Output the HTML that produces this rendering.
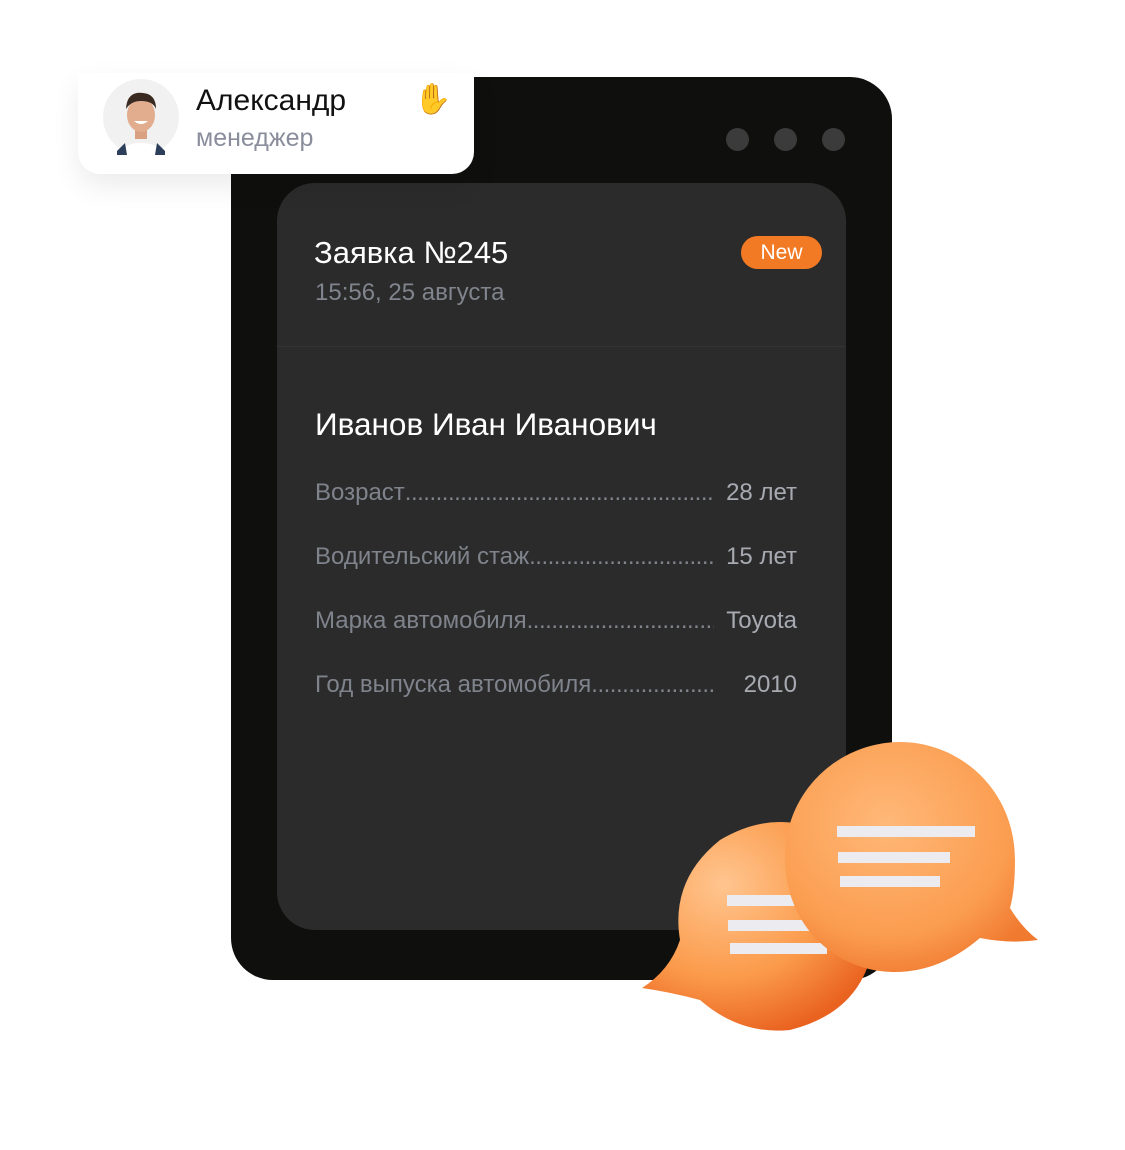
<!DOCTYPE html>
<html><head><meta charset="utf-8"><style>
body{margin:0;width:1125px;height:1150px;background:#fff;position:relative;overflow:hidden;font-family:"Liberation Sans",sans-serif}
.frame{position:absolute;left:231px;top:77px;width:661px;height:903px;background:#0f100d;border-radius:42px}
.dot{position:absolute;top:128px;width:23px;height:23px;border-radius:50%;background:#3b3b3b}
.card{position:absolute;left:277px;top:183px;width:569px;height:747px;background:#2b2b2b;border-radius:38px}
.div{position:absolute;left:277px;top:346px;width:569px;height:1px;background:#333}
.t{position:absolute;white-space:nowrap}
.row{position:absolute;left:315px;width:482px;font-size:24px;color:#7f838c;display:flex}
.row .d{flex:1;overflow:hidden;color:#7f838c;letter-spacing:-0.5px}
.row .v{color:#a7aab1;padding-left:12px}
.prof{position:absolute;left:78px;top:73px;width:396px;height:101px;background:#fff;border-radius:0 0 22px 22px;box-shadow:0 12px 28px rgba(0,0,0,.08)}
</style></head><body>
<div class="frame"></div>
<div class="dot" style="left:726px"></div><div class="dot" style="left:774px"></div><div class="dot" style="left:822px"></div>
<div class="card"></div><div class="div"></div>
<div class="t" style="left:314px;top:235px;font-size:31px;color:#fff">Заявка №245</div>
<div class="t" style="left:315px;top:279px;font-size:24px;color:#80848d">15:56, 25 августа</div>
<div class="t" style="left:741px;top:236px;width:81px;height:33px;border-radius:17px;background:#f27a25;color:#fff;font-size:21px;line-height:33px;text-align:center">New</div>
<div class="t" style="left:315px;top:406px;font-size:31.5px;color:#fff">Иванов Иван Иванович</div>
<div class="row" style="top:479px"><span>Возраст</span><span class="d">..................................................................................</span><span class="v">28 лет</span></div>
<div class="row" style="top:543px"><span>Водительский стаж</span><span class="d">..................................................................................</span><span class="v">15 лет</span></div>
<div class="row" style="top:607px"><span>Марка автомобиля</span><span class="d">..................................................................................</span><span class="v">Toyota</span></div>
<div class="row" style="top:671px"><span>Год выпуска автомобиля</span><span class="d">..................................................................................</span><span class="v" style="padding-left:30px">2010</span></div>
<div class="prof"></div>
<svg style="position:absolute;left:103px;top:79px" width="76" height="76" viewBox="0 0 76 76">
<circle cx="38" cy="38" r="38" fill="#f1f1f2"/>
<path d="M14 72 Q38 56 62 72 L62 76 L14 76Z" fill="#fff"/>
<path d="M14 72 L22 64 L24 76 L14 76Z M62 72 L54 64 L52 76 L62 76Z" fill="#2c3e5a"/>
<rect x="32" y="48" width="12" height="12" fill="#d9a081"/>
<ellipse cx="38" cy="36" rx="14" ry="17" fill="#e2ad8e"/>
<path d="M23 30 Q24 12 40 14 Q53 15 53 30 Q50 22 38 22 Q28 22 23 30Z" fill="#3a2a22"/>
<path d="M31 42 Q38 48 45 42Z" fill="#fff"/>
</svg>
<div class="t" style="left:196px;top:84px;font-size:30px;color:#111">Александр</div>
<div class="t" style="left:196px;top:124px;font-size:25px;color:#8a8e9c">менеджер</div>
<div class="t" style="left:414px;top:82px;font-size:30px;color:#f5b83d">✋</div>
<svg style="position:absolute;left:630px;top:730px" width="420" height="320" viewBox="0 0 420 320">
<defs>
<radialGradient id="g1" cx="35%" cy="30%" r="75%"><stop offset="0" stop-color="#ffc58f"/><stop offset=".6" stop-color="#fb9a4a"/><stop offset="1" stop-color="#e9621f"/></radialGradient>
<radialGradient id="g2" cx="40%" cy="35%" r="70%"><stop offset="0" stop-color="#ffb878"/><stop offset=".7" stop-color="#fb9d50"/><stop offset="1" stop-color="#f07a30"/></radialGradient>
</defs>
<path d="M12 258 Q40 240 50 210 Q40 150 90 110 Q140 80 190 100 Q240 130 245 200 Q240 280 160 300 Q110 305 70 270 Q40 262 12 258Z" fill="url(#g1)"/>
<rect x="97" y="165" width="100" height="11" fill="#ecebef"/>
<rect x="98" y="190" width="100" height="11" fill="#ecebef"/>
<rect x="100" y="213" width="97" height="11" fill="#ecebef"/>
<path d="M270 12 C330 12 385 60 385 130 Q385 160 380 178 Q392 198 408 210 Q380 214 350 208 Q310 242 265 242 C205 242 155 195 155 128 C155 60 210 12 270 12Z" fill="url(#g2)"/>
<rect x="207" y="96" width="138" height="11" fill="#ecebef"/>
<rect x="208" y="122" width="112" height="11" fill="#ecebef"/>
<rect x="210" y="146" width="100" height="11" fill="#ecebef"/>
</svg>
</body></html>
